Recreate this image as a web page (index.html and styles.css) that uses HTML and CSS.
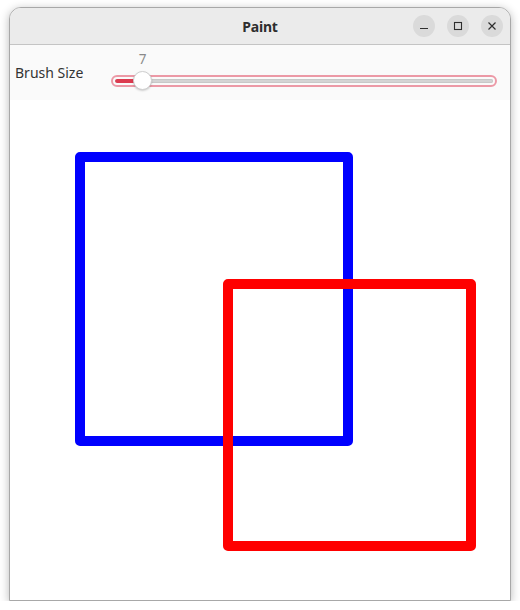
FILE: index.html
```html
<!DOCTYPE html>
<html>
<head>
<meta charset="utf-8">
<link rel="stylesheet" href="styles.css">
</head>
<body>
<div class="window">
  <div class="titlebar">
    <div class="spacer"></div>
    <div class="title">Paint</div>
    <div class="buttons">
      <span class="wbtn"><svg width="10" height="10" viewBox="0 0 10 10"><path d="M1 7.5h8" stroke="#2e2e2e" stroke-width="1.2" fill="none"/></svg></span>
      <span class="wbtn"><svg width="10" height="10" viewBox="0 0 10 10"><rect x="1.5" y="1.5" width="7" height="7" stroke="#2e2e2e" stroke-width="1.1" fill="none"/></svg></span>
      <span class="wbtn"><svg width="10" height="10" viewBox="0 0 10 10"><path d="M1.5 1.5l7 7M8.5 1.5l-7 7" stroke="#2e2e2e" stroke-width="1.2" fill="none"/></svg></span>
    </div>
  </div>
  <div class="controls">
    <div class="label">Brush Size</div>
    <div class="scale">
      <div class="trough">
        <div class="rail"><div class="fill" style="width:22px"></div></div>
        <div class="knob" style="left:31.5px"><span class="value">7</span></div>
      </div>
    </div>
  </div>
  <div class="canvas">
    <svg width="500" height="500" viewBox="0 0 500 500">
      <rect x="70" y="57" width="268" height="284" fill="none" stroke="#0000ff" stroke-width="10" stroke-linejoin="round"/>
      <rect x="218" y="184" width="243" height="262" fill="none" stroke="#ff0000" stroke-width="10" stroke-linejoin="round"/>
    </svg>
  </div>
</div>
</body>
</html>
```
FILE: styles.css
```css
html, body {
  margin: 0;
  padding: 0;
  background: #ffffff;
}
body {
  padding-top: 7px;
  padding-left: 9px;
}
.window {
  width: 500px;
  border: 1px solid #a8a8a8;
  border-radius: 12px 12px 0 0;
  overflow: hidden;
  box-shadow: 0 2px 10px rgba(0,0,0,0.28);
  font-family: "Noto Sans", "DejaVu Sans", sans-serif;
  background: #fff;
}
.titlebar {
  height: 36px;
  background: #ebebeb;
  border-bottom: 1px solid #c4c4c4;
  display: grid;
  grid-template-columns: 1fr auto 1fr;
  align-items: center;
}
.title {
  font-weight: 700;
  font-size: 14px;
  color: #2e2e2e;
  letter-spacing: -0.2px;
}
.buttons {
  display: flex;
  justify-content: flex-end;
  gap: 12px;
  padding-right: 7px;
}
.wbtn {
  width: 22px;
  height: 22px;
  border-radius: 50%;
  background: #dadada;
  display: flex;
  align-items: center;
  justify-content: center;
}
.wbtn svg { display: block; }
.controls {
  height: 55px;
  background: #fafafa;
  display: flex;
  align-items: flex-start;
  padding: 0 13px 0 5px;
}
.label {
  margin-top: 18px;
  font-size: 14px;
  color: #333333;
  width: 96px;
  letter-spacing: 0;
}
.scale {
  flex: 1;
  padding-top: 30px;
}
.trough {
  position: relative;
  height: 12px;
  box-sizing: border-box;
  border: 2px solid #ec99a6;
  border-radius: 7px;
  padding: 2px 2px;
  background: #fafafa;
}
.rail {
  height: 4px;
  background: #d4d4d4;
  border-radius: 3px;
  box-shadow: inset 0 0 0 1px #c8c8c8;
  overflow: hidden;
}
.fill {
  height: 100%;
  background: #dc3a4f;
  border-radius: 3px;
}
.knob {
  position: absolute;
  top: 50%;
  width: 19px;
  height: 19px;
  margin-left: -11.5px;
  margin-top: -10px;
  box-sizing: border-box;
  border-radius: 50%;
  background: #ffffff;
  border: 1px solid #cfcfcf;
  box-shadow: 0 1px 2px rgba(0,0,0,0.18);
}
.value {
  position: absolute;
  left: 50%;
  bottom: 21px;
  transform: translateX(-50%);
  font-size: 13.5px;
  color: #8a8a8a;
}
.canvas {
  height: 500px;
  background: #ffffff;
}
.canvas svg { display: block; }
```
